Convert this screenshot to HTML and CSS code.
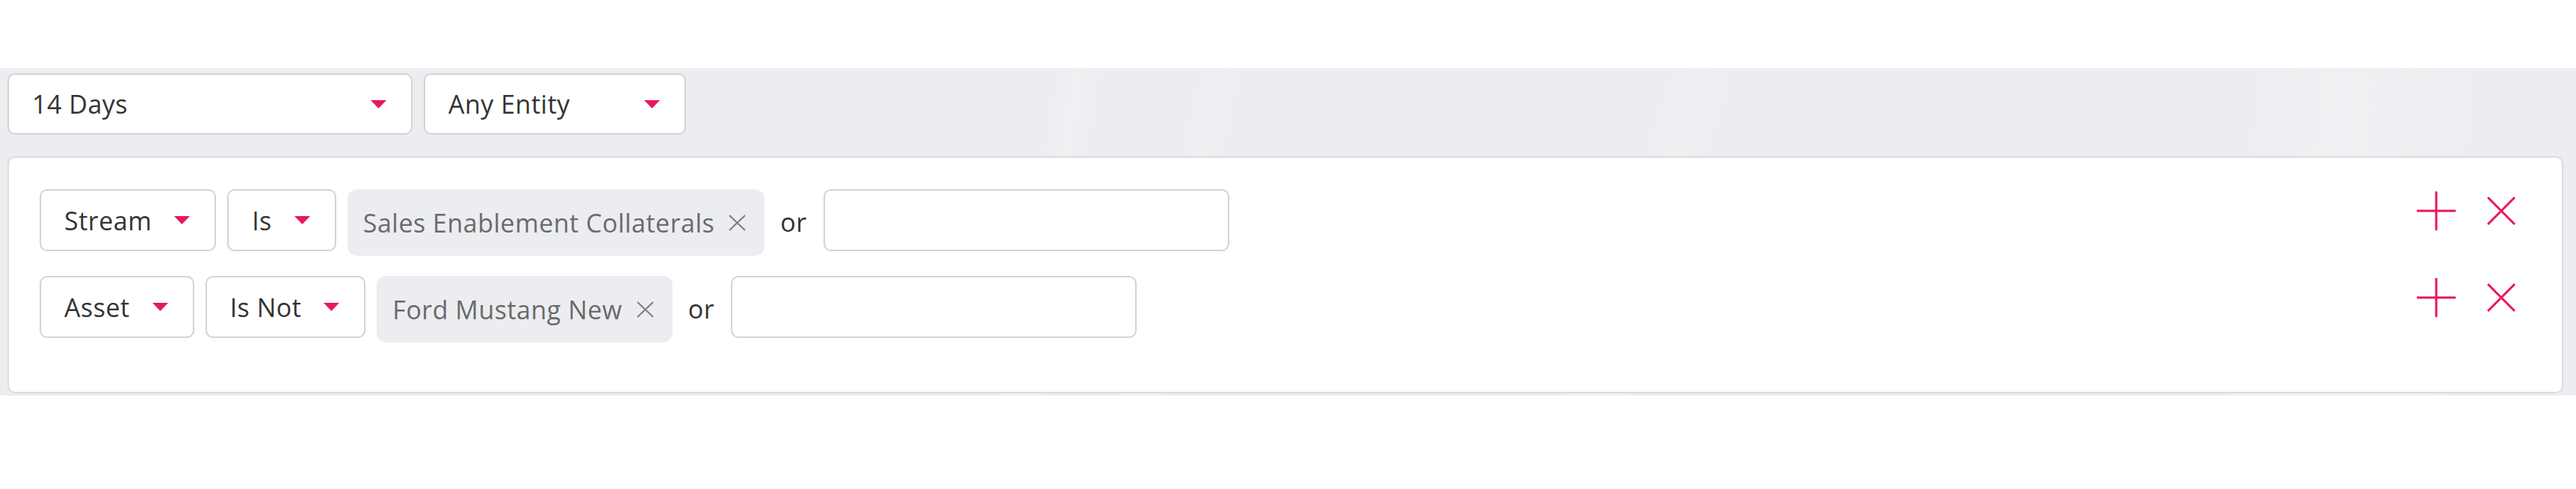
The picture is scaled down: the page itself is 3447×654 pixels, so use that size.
FILE: index.html
```html
<!DOCTYPE html>
<html lang="en">
<head>
<meta charset="utf-8">
<title>Filters</title>
<link rel="stylesheet" href="styles.css">
</head>
<body>
<div class="filters">
  <div class="topbar">
    <div class="select select-days"><span class="label">14 Days</span><svg class="caret" viewBox="0 0 21 11" width="21" height="11"><polygon points="0,0 21,0 10.5,11"/></svg></div>
    <div class="select select-entity"><span class="label">Any Entity</span><svg class="caret" viewBox="0 0 21 11" width="21" height="11"><polygon points="0,0 21,0 10.5,11"/></svg></div>
  </div>
  <div class="panel">
    <div class="row">
      <div class="select"><span class="label">Stream</span><svg class="caret" viewBox="0 0 21 11" width="21" height="11"><polygon points="0,0 21,0 10.5,11"/></svg></div>
      <div class="select"><span class="label">Is</span><svg class="caret" viewBox="0 0 21 11" width="21" height="11"><polygon points="0,0 21,0 10.5,11"/></svg></div>
      <div class="chip"><span class="chip-text">Sales Enablement Collaterals</span><svg class="chip-x" viewBox="0 0 23 22" width="23" height="22"><path d="M1 1 L22 21 M22 1 L1 21"/></svg></div>
      <span class="or">or</span>
      <input class="value" type="text">
      <div class="actions">
        <svg class="icon-plus" viewBox="0 0 52 52" width="52" height="52"><path d="M26 0 V52 M0 26 H52"/></svg>
        <svg class="icon-x" viewBox="0 0 38 38" width="38" height="38"><path d="M1 1 L37 37 M37 1 L1 37"/></svg>
      </div>
    </div>
    <div class="row">
      <div class="select"><span class="label">Asset</span><svg class="caret" viewBox="0 0 21 11" width="21" height="11"><polygon points="0,0 21,0 10.5,11"/></svg></div>
      <div class="select"><span class="label">Is Not</span><svg class="caret" viewBox="0 0 21 11" width="21" height="11"><polygon points="0,0 21,0 10.5,11"/></svg></div>
      <div class="chip"><span class="chip-text">Ford Mustang New</span><svg class="chip-x" viewBox="0 0 23 22" width="23" height="22"><path d="M1 1 L22 21 M22 1 L1 21"/></svg></div>
      <span class="or">or</span>
      <input class="value" type="text">
      <div class="actions">
        <svg class="icon-plus" viewBox="0 0 52 52" width="52" height="52"><path d="M26 0 V52 M0 26 H52"/></svg>
        <svg class="icon-x" viewBox="0 0 38 38" width="38" height="38"><path d="M1 1 L37 37 M37 1 L1 37"/></svg>
      </div>
    </div>
  </div>
</div>
</body>
</html>
```
FILE: styles.css
```css
html, body {
  margin: 0;
  padding: 0;
  background: #ffffff;
}

body {
  font-family: "Open Sans", "Liberation Sans", sans-serif;
  font-size: 34px;
  letter-spacing: 0.5px;
  color: #333333;
}

.filters {
  margin-top: 91px;
  background-color: #ecedf0;
  background-image:
    linear-gradient(100deg, transparent 40%, rgba(255,255,255,0.18) 41%, transparent 42%),
    linear-gradient(104deg, transparent 45%, rgba(255,255,255,0.15) 46%, transparent 47%),
    linear-gradient(108deg, transparent 62%, rgba(255,255,255,0.15) 63.5%, transparent 65%),
    linear-gradient(95deg, transparent 86%, rgba(255,255,255,0.18) 90%, transparent 96%);
  padding: 7px 17px 3px 10px;
}

.topbar {
  display: flex;
  gap: 15px;
}

.select {
  box-sizing: border-box;
  height: 82px;
  display: flex;
  align-items: center;
  gap: 30px;
  padding: 0 33px 0 31px;
  background: #ffffff;
  border: 2px solid #d3d3d3;
  border-radius: 10px;
  white-space: nowrap;
}

.topbar .select {
  justify-content: space-between;
}

.select-days {
  width: 542px;
}

.select-entity {
  width: 351px;
}

.label {
  line-height: 46px;
}

.caret {
  flex: none;
  display: block;
  fill: #e8175c;
}

.panel {
  margin-top: 29px;
  background: #ffffff;
  border: 2px solid #dcdcdc;
  border-radius: 10px;
  padding: 42px 62px 66px 41px;
  display: flex;
  flex-direction: column;
  gap: 27px;
}

.row {
  display: flex;
  align-items: flex-start;
}

.row .select {
  height: 83px;
  margin-right: 15px;
}

.chip {
  box-sizing: border-box;
  height: 89px;
  display: flex;
  align-items: center;
  gap: 19px;
  padding: 0 25px 0 21px;
  background: #ecedf0;
  border-radius: 13px;
  color: #6a6a6a;
  white-space: nowrap;
}

.chip-x {
  flex: none;
  display: block;
  stroke: #7d7d7d;
  stroke-width: 2;
  fill: none;
}

.or {
  line-height: 89px;
  margin: 0 22px 0 21px;
  color: #333333;
}

.value {
  box-sizing: border-box;
  width: 543px;
  height: 83px;
  margin: 0;
  padding: 0 20px;
  border: 2px solid #d3d3d3;
  border-radius: 10px;
  background: #ffffff;
  font: inherit;
  outline: none;
}

.actions {
  margin-left: auto;
  height: 58px;
  display: flex;
  align-items: center;
  gap: 42px;
}

.actions svg {
  display: block;
  fill: none;
  stroke: #e8175c;
  stroke-width: 3;
}
```
